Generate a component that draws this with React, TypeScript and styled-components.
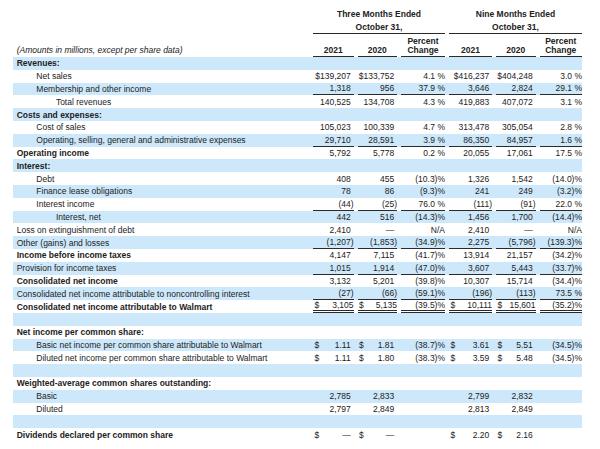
import React from "react";
import styled, { createGlobalStyle } from "styled-components";

const Global = createGlobalStyle`
  html, body { margin: 0; padding: 0; background: #ffffff; }
  body {
    font-family: "Liberation Sans", Arial, sans-serif;
    font-size: 8.5px;
    color: #222222;
  }
`;

const COLS = "296px 44.5px 43.5px 48px 47px 43.5px 46.5px";
const BLUE = "#cde8fa";

const Sheet = styled.div`
  width: 569px;
  margin-left: 13px;
  padding-top: 8px;
`;

const HeadRow = styled.div<{ $h: number }>`
  display: grid;
  grid-template-columns: ${COLS};
  height: ${(p) => p.$h}px;
`;

const GroupCell = styled.div<{ $start: number; $line?: boolean }>`
  grid-column: ${(p) => p.$start} / span 3;
  padding-left: 4px;
  display: flex;
`;

const GroupText = styled.div<{ $line?: boolean }>`
  flex: 1;
  display: flex;
  align-items: center;
  justify-content: center;
  font-weight: 700;
  border-bottom: ${(p) => (p.$line ? "1px solid #2a2a2a" : "none")};
`;

const AmountsNote = styled.div`
  font-style: italic;
  padding-left: 3.7px;
  display: flex;
  align-items: flex-end;
  padding-bottom: 2.5px;
`;

const ColHead = styled.div`
  padding-left: 4px;
  display: flex;
`;

const ColHeadInner = styled.div`
  flex: 1;
  display: flex;
  flex-direction: column;
  justify-content: flex-end;
  align-items: center;
  text-align: center;
  font-weight: 700;
  line-height: 9px;
  padding-bottom: 1.5px;
  border-bottom: 1px solid #2a2a2a;
`;

const Row = styled.div<{ $blue: boolean }>`
  display: grid;
  grid-template-columns: ${COLS};
  height: 12.8px;
  background: ${(p) => (p.$blue ? BLUE : "#ffffff")};
`;

const Label = styled.div<{ $level: number; $bold?: boolean }>`
  display: flex;
  align-items: center;
  white-space: nowrap;
  padding-left: ${(p) => 3.7 + p.$level * 19.6}px;
  font-weight: ${(p) => (p.$bold ? 700 : 400)};
`;

const Cell = styled.div`
  padding-left: 4px;
  display: flex;
  min-width: 0;
`;

type Rule = "none" | "single" | "double";

const CellInner = styled.div<{ $rule: Rule; $pad: boolean }>`
  flex: 1;
  display: flex;
  align-items: center;
  justify-content: space-between;
  white-space: nowrap;
  box-sizing: border-box;
  padding-right: ${(p) => (p.$pad ? "2.8px" : "0")};
  border-bottom: ${(p) =>
    p.$rule === "single"
      ? "1px solid #2a2a2a"
      : p.$rule === "double"
      ? "3px double #2a2a2a"
      : "none"};
`;

const Dollar = styled.span`
  padding-left: 1.5px;
`;

const Num = styled.span`
  margin-left: auto;
`;

type RowData = {
  label: string;
  level?: number;
  bold?: boolean;
  cells?: string[];
  rule?: Rule;
  tight?: boolean;
};

const rows: RowData[] = [
  { label: "Revenues:", bold: true },
  { label: "Net sales", level: 1, cells: ["$139,207", "$133,752", "4.1 %", "$416,237", "$404,248", "3.0 %"] },
  { label: "Membership and other income", level: 1, cells: ["1,318", "956", "37.9 %", "3,646", "2,824", "29.1 %"], rule: "single" },
  { label: "Total revenues", level: 2, cells: ["140,525", "134,708", "4.3 %", "419,883", "407,072", "3.1 %"] },
  { label: "Costs and expenses:", bold: true },
  { label: "Cost of sales", level: 1, cells: ["105,023", "100,339", "4.7 %", "313,478", "305,054", "2.8 %"] },
  { label: "Operating, selling, general and administrative expenses", level: 1, cells: ["29,710", "28,591", "3.9 %", "86,350", "84,957", "1.6 %"], rule: "single" },
  { label: "Operating income", bold: true, cells: ["5,792", "5,778", "0.2 %", "20,055", "17,061", "17.5 %"] },
  { label: "Interest:", bold: true },
  { label: "Debt", level: 1, cells: ["408", "455", "(10.3)%", "1,326", "1,542", "(14.0)%"] },
  { label: "Finance lease obligations", level: 1, cells: ["78", "86", "(9.3)%", "241", "249", "(3.2)%"] },
  { label: "Interest income", level: 1, cells: ["(44)", "(25)", "76.0 %", "(111)", "(91)", "22.0 %"], rule: "single" },
  { label: "Interest, net", level: 2, cells: ["442", "516", "(14.3)%", "1,456", "1,700", "(14.4)%"] },
  { label: "Loss on extinguishment of debt", cells: ["2,410", "\u2014", "N/A", "2,410", "\u2014", "N/A"] },
  { label: "Other (gains) and losses", cells: ["(1,207)", "(1,853)", "(34.9)%", "2,275", "(5,796)", "(139.3)%"], rule: "single" },
  { label: "Income before income taxes", bold: true, cells: ["4,147", "7,115", "(41.7)%", "13,914", "21,157", "(34.2)%"] },
  { label: "Provision for income taxes", cells: ["1,015", "1,914", "(47.0)%", "3,607", "5,443", "(33.7)%"], rule: "single" },
  { label: "Consolidated net income", bold: true, cells: ["3,132", "5,201", "(39.8)%", "10,307", "15,714", "(34.4)%"] },
  { label: "Consolidated net income attributable to noncontrolling interest", cells: ["(27)", "(66)", "(59.1)%", "(196)", "(113)", "73.5 %"], rule: "single" },
  { label: "Consolidated net income attributable to Walmart", bold: true, cells: ["$ 3,105", "$ 5,135", "(39.5)%", "$ 10,111", "$ 15,601", "(35.2)%"], rule: "double", tight: true },
  { label: "" },
  { label: "Net income per common share:", bold: true },
  { label: "Basic net income per common share attributable to Walmart", level: 1, cells: ["$ 1.11", "$ 1.81", "(38.7)%", "$ 3.61", "$ 5.51", "(34.5)%"] },
  { label: "Diluted net income per common share attributable to Walmart", level: 1, cells: ["$ 1.11", "$ 1.80", "(38.3)%", "$ 3.59", "$ 5.48", "(34.5)%"] },
  { label: "" },
  { label: "Weighted-average common shares outstanding:", bold: true },
  { label: "Basic", level: 1, cells: ["2,785", "2,833", "", "2,799", "2,832", ""] },
  { label: "Diluted", level: 1, cells: ["2,797", "2,849", "", "2,813", "2,849", ""] },
  { label: "" },
  { label: "Dividends declared per common share", bold: true, cells: ["$ \u2014", "$ \u2014", "", "$ 2.20", "$ 2.16", ""] },
];

function ValueCell({ value, col, rule, tight }: { value: string; col: number; rule: Rule; tight?: boolean }) {
  const isPct = col === 2 || col === 5;
  const split = value.startsWith("$ ");
  const num = split ? value.slice(2) : value;
  const endsParen = num.endsWith(")") || num.endsWith("%") || num === "N/A";
  const pad = !isPct && !tight && !endsParen && num !== "";
  return (
    <Cell>
      <CellInner $rule={rule} $pad={pad}>
        {split && <Dollar>$</Dollar>}
        <Num>{num}</Num>
      </CellInner>
    </Cell>
  );
}

export default function App() {
  return (
    <>
      <Global />
      <Sheet>
        <HeadRow $h={12.5}>
          <div />
          <GroupCell $start={2}>
            <GroupText>Three Months Ended</GroupText>
          </GroupCell>
          <GroupCell $start={5}>
            <GroupText>Nine Months Ended</GroupText>
          </GroupCell>
        </HeadRow>
        <HeadRow $h={13}>
          <div />
          <GroupCell $start={2}>
            <GroupText $line>October 31,</GroupText>
          </GroupCell>
          <GroupCell $start={5}>
            <GroupText $line>October 31,</GroupText>
          </GroupCell>
        </HeadRow>
        <HeadRow $h={23.5}>
          <AmountsNote>(Amounts in millions, except per share data)</AmountsNote>
          {["2021", "2020", "Percent|Change", "2021", "2020", "Percent|Change"].map((h, i) => (
            <ColHead key={i}>
              <ColHeadInner>
                {h.split("|").map((t) => (
                  <span key={t}>{t}</span>
                ))}
              </ColHeadInner>
            </ColHead>
          ))}
        </HeadRow>
        {rows.map((r, i) => (
          <Row key={i} $blue={i % 2 === 0}>
            <Label $level={r.level ?? 0} $bold={r.bold}>
              {r.label}
            </Label>
            {r.cells
              ? r.cells.map((c, j) => (
                  <ValueCell key={j} value={c} col={j} rule={r.rule ?? "none"} tight={r.tight} />
                ))
              : null}
          </Row>
        ))}
      </Sheet>
    </>
  );
}
